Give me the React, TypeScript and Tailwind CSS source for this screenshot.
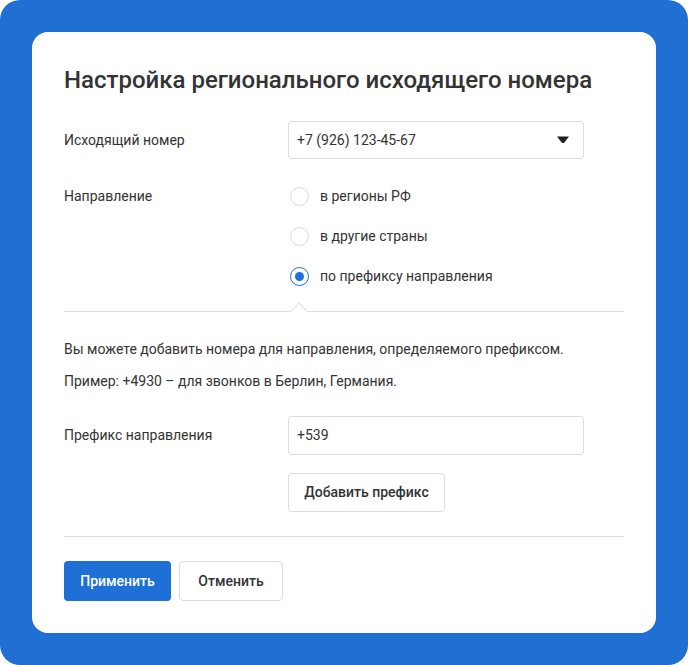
import React from "react";

function Radio({ checked, label }: { checked?: boolean; label: string }) {
  return (
    <div className="flex h-10 items-center">
      <span
        className={
          checked
            ? "flex h-[19px] w-[19px] items-center justify-center rounded-full border-[1.5px] border-[#1e6fd6]"
            : "flex h-[19px] w-[19px] items-center justify-center rounded-full border border-[#d9d9d9]"
        }
      >
        {checked && <span className="h-[9px] w-[9px] rounded-full bg-[#1e6fd6]" />}
      </span>
      <span className="ml-[11px] text-[14px] text-[#333]">{label}</span>
    </div>
  );
}

export default function App() {
  return (
    <div
      className="flex h-[665px] w-[688px] bg-white"
      style={{ fontFamily: "Roboto, 'Noto Sans', sans-serif" }}
    >
      <div className="flex h-full w-full rounded-[20px] bg-[#2070d4] p-8">
        <div className="flex w-full flex-col rounded-[16px] bg-white px-8 pt-8">
          <h1 className="h-8 text-[24px] font-medium leading-8 text-[#333]">
            Настройка регионального исходящего номера
          </h1>

          <div className="mt-[25px] flex items-center">
            <div className="w-[224px] text-[14px] text-[#333]">Исходящий номер</div>
            <div className="flex h-[38px] w-[296px] items-center justify-between rounded-[4px] border border-[#dcdcdc] pl-[8px] pr-[14px] text-[14px] text-[#333]">
              <span>+7 (926) 123-45-67</span>
              <svg width="12" height="8" viewBox="0 0 12 8">
                <path d="M0 0.5 H12 L7 7 H5 Z" fill="#222" />
              </svg>
            </div>
          </div>

          <div className="mt-[17px] flex">
            <div className="flex h-10 w-[224px] items-center text-[14px] text-[#333]">Направление</div>
            <div className="flex flex-col pl-[2px]">
              <Radio label="в регионы РФ" />
              <Radio label="в другие страны" />
              <Radio checked label="по префиксу направления" />
            </div>
          </div>

          <div className="relative mt-[15px] h-px w-full bg-[#dedede]">
            <div className="absolute left-[229px] top-[-6px] h-[12px] w-[12px] rotate-45 border-l border-t border-[#dedede] bg-white" />
          </div>

          <p className="mt-[27px] text-[14px] leading-[20px] text-[#333]">
            Вы можете добавить номера для направления, определяемого префиксом.
          </p>
          <p className="mt-[12px] text-[14px] leading-[20px] text-[#333]">
            Пример: +4930 – для звонков в Берлин, Германия.
          </p>

          <div className="mt-[25px] flex items-center">
            <div className="w-[224px] text-[14px] text-[#333]">Префикс направления</div>
            <div className="flex h-[39px] w-[296px] items-center rounded-[4px] border border-[#dcdcdc] pl-[8px] text-[14px] text-[#333]">
              +539
            </div>
          </div>

          <div className="mt-[18px] flex">
            <div className="w-[224px]" />
            <button className="h-[39px] w-[157px] rounded-[4px] border border-[#dcdcdc] bg-white text-[14px] font-medium text-[#333]">
              Добавить префикс
            </button>
          </div>

          <div className="mt-[24px] h-px w-full bg-[#dedede]" />

          <div className="mt-[24px] flex gap-2">
            <button className="h-10 w-[107px] rounded-[4px] bg-[#1e6fd6] text-[14px] font-medium text-white">
              Применить
            </button>
            <button className="h-10 w-[104px] rounded-[4px] border border-[#dcdcdc] bg-white text-[14px] font-medium text-[#333]">
              Отменить
            </button>
          </div>
        </div>
      </div>
    </div>
  );
}
